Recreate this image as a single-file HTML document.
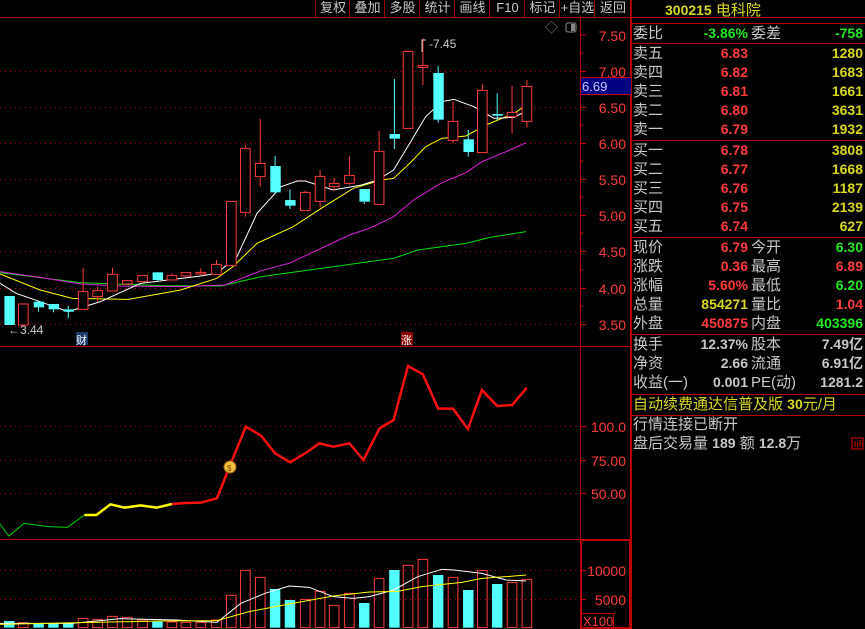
<!DOCTYPE html>
<html><head><meta charset="utf-8"><style>
*{margin:0;padding:0}
body{width:865px;height:629px;background:#000;overflow:hidden;position:relative;font-family:"Liberation Sans","Noto Sans CJK SC",sans-serif}
.t{position:absolute;white-space:nowrap;font-size:15px;line-height:17px}
.l{color:#c8c8c8}
.n{font-weight:bold;font-size:14px;text-align:right}
.r{color:#ff3b3b}.g{color:#22e822}.y{color:#d8d820}.w{color:#c8c8c8}
.tb{position:absolute;top:0;height:17px;color:#c8c8c8;font-size:13px;line-height:16px;text-align:center;border-left:1px solid #900}
</style></head><body>
<svg width="865" height="629" style="position:absolute;left:0;top:0">
<!-- frame lines -->
<line x1="0" y1="17.5" x2="865" y2="17.5" stroke="#a00" />
<line x1="580.5" y1="17" x2="580.5" y2="629" stroke="#b00"/>
<line x1="631" y1="0" x2="631" y2="629" stroke="#b00" stroke-width="2"/>
<line x1="0" y1="346.5" x2="631" y2="346.5" stroke="#b00"/>
<line x1="0" y1="539.5" x2="631" y2="539.5" stroke="#b00"/>
<rect x="581" y="540" width="49" height="88" fill="none" stroke="#b00" stroke-width="2"/>
<!-- price grid -->
<g stroke="#a00" stroke-dasharray="1 4">
<line x1="0" y1="71.5" x2="580" y2="71.5"/><line x1="0" y1="107.5" x2="580" y2="107.5"/>
<line x1="0" y1="143.5" x2="580" y2="143.5"/><line x1="0" y1="179.5" x2="580" y2="179.5"/>
<line x1="0" y1="215.5" x2="580" y2="215.5"/><line x1="0" y1="251.5" x2="580" y2="251.5"/>
<line x1="0" y1="288.5" x2="580" y2="288.5"/><line x1="0" y1="324.5" x2="580" y2="324.5"/>
<line x1="0" y1="426.5" x2="580" y2="426.5"/><line x1="0" y1="460.5" x2="580" y2="460.5"/><line x1="0" y1="493.5" x2="580" y2="493.5"/>
<line x1="0" y1="570.5" x2="580" y2="570.5"/><line x1="0" y1="599.5" x2="580" y2="599.5"/>
</g>
<g stroke="#c00">
<line x1="580" y1="35" x2="586" y2="35"/><line x1="580" y1="53" x2="583" y2="53"/><line x1="580" y1="71.5" x2="586" y2="71.5"/>
<line x1="580" y1="107.5" x2="586" y2="107.5"/><line x1="580" y1="125" x2="583" y2="125"/><line x1="580" y1="143.5" x2="586" y2="143.5"/><line x1="580" y1="161" x2="583" y2="161"/>
<line x1="580" y1="179.5" x2="586" y2="179.5"/><line x1="580" y1="197" x2="583" y2="197"/><line x1="580" y1="215.5" x2="586" y2="215.5"/><line x1="580" y1="233" x2="583" y2="233"/>
<line x1="580" y1="251.5" x2="586" y2="251.5"/><line x1="580" y1="270" x2="583" y2="270"/><line x1="580" y1="288.5" x2="586" y2="288.5"/><line x1="580" y1="306" x2="583" y2="306"/><line x1="580" y1="324.5" x2="586" y2="324.5"/>
<line x1="580" y1="426.5" x2="586" y2="426.5"/><line x1="580" y1="460.5" x2="586" y2="460.5"/><line x1="580" y1="493.5" x2="586" y2="493.5"/>
<line x1="580" y1="570.5" x2="586" y2="570.5"/><line x1="580" y1="599.5" x2="586" y2="599.5"/>
</g>
<g font-family="Liberation Sans" font-size="14" fill="#ff3b3b" text-anchor="end">
<text x="626" y="41">7.50</text><text x="626" y="77">7.00</text><text x="626" y="149">6.00</text>
<text x="626" y="185">5.50</text><text x="626" y="221">5.00</text><text x="626" y="257">4.50</text>
<text x="626" y="294">4.00</text><text x="626" y="330">3.50</text><text x="626" y="113">6.50</text>
<text x="626" y="432">100.0</text><text x="626" y="466">75.00</text><text x="626" y="499">50.00</text>
<text x="626" y="576">10000</text><text x="626" y="605">5000</text>
</g>
<rect x="581" y="78" width="50" height="16" fill="#000080"/>
<line x1="581" y1="77.5" x2="631" y2="77.5" stroke="#c00"/><line x1="581" y1="94.5" x2="631" y2="94.5" stroke="#c00"/>
<text x="582" y="91" font-family="Liberation Sans" font-size="13" fill="#c8c8ff">6.69</text>
<rect x="581.5" y="613.5" width="32" height="15" fill="none" stroke="#b00"/>
<text x="583" y="626" font-family="Liberation Sans" font-size="13" fill="#ff3b3b">X100</text>
<text x="545" y="32" font-size="13" fill="#888">◇</text>
<rect x="566" y="23" width="10" height="9" rx="2" fill="none" stroke="#888"/><rect x="571" y="24" width="4" height="7" fill="#888"/>

<!-- price panel data (zoom coords) -->
<g transform="scale(0.40161,0.33333)">
<g stroke="#54ffff" stroke-width="1" vector-effect="non-scaling-stroke">
</g>
<g fill="none" stroke-width="1">
<polyline vector-effect="non-scaling-stroke" stroke="#00e000" points="0,818 200,848 400,857 550,858 650,830 800,805 980,775 1040,750 1160,730 1220,712 1310,695"/>
<polyline vector-effect="non-scaling-stroke" stroke="#e020e0" points="0,815 100,832 200,852 300,858 450,860 560,855 650,812 720,790 800,745 870,705 920,685 980,650 1030,600 1100,548 1160,518 1200,485 1260,455 1310,428"/>
<polyline vector-effect="non-scaling-stroke" stroke="#ffff00" points="0,822 100,870 180,895 320,898 450,870 540,835 580,800 640,730 730,680 800,625 880,565 950,540 980,535 1020,490 1060,440 1100,415 1160,408 1210,375 1280,340 1310,316"/>
<polyline vector-effect="non-scaling-stroke" stroke="#ffffff" points="0,850 40,880 100,905 170,935 250,905 350,850 500,828 540,820 590,770 640,640 700,560 740,543 760,543 830,570 900,555 940,540 980,510 1020,430 1060,350 1100,305 1130,298 1180,320 1230,355 1280,352 1310,333"/>
</g>
<g stroke="#ff3b3b" vector-effect="non-scaling-stroke">
<line vector-effect="non-scaling-stroke" x1="207" y1="803" x2="207" y2="928"/><line vector-effect="non-scaling-stroke" x1="243" y1="860" x2="243" y2="905"/><line vector-effect="non-scaling-stroke" x1="280" y1="803" x2="280" y2="873"/>
<line vector-effect="non-scaling-stroke" x1="428" y1="820" x2="428" y2="840"/><line vector-effect="non-scaling-stroke" x1="500" y1="805" x2="500" y2="825"/><line vector-effect="non-scaling-stroke" x1="539" y1="780" x2="539" y2="823"/>
<line vector-effect="non-scaling-stroke" x1="611" y1="435" x2="611" y2="650"/><line vector-effect="non-scaling-stroke" x1="648" y1="357" x2="648" y2="560"/><line vector-effect="non-scaling-stroke" x1="760" y1="572" x2="760" y2="632"/>
<line vector-effect="non-scaling-stroke" x1="797" y1="510" x2="797" y2="622"/><line vector-effect="non-scaling-stroke" x1="832" y1="533" x2="832" y2="572"/><line vector-effect="non-scaling-stroke" x1="870" y1="468" x2="870" y2="555"/>
<line vector-effect="non-scaling-stroke" x1="944" y1="393" x2="944" y2="613"/><line vector-effect="non-scaling-stroke" x1="1053" y1="115" x2="1053" y2="255"/><line vector-effect="non-scaling-stroke" x1="1128" y1="305" x2="1128" y2="430"/>
<line vector-effect="non-scaling-stroke" x1="1201" y1="253" x2="1201" y2="458"/><line vector-effect="non-scaling-stroke" x1="1275" y1="258" x2="1275" y2="400"/><line vector-effect="non-scaling-stroke" x1="1312" y1="240" x2="1312" y2="383"/>
</g>
<g fill="#000" stroke="#ff3b3b">
<rect vector-effect="non-scaling-stroke" x="46" y="912" width="24" height="63"/><rect vector-effect="non-scaling-stroke" x="195" y="875" width="24" height="53"/>
<rect vector-effect="non-scaling-stroke" x="231" y="872" width="24" height="18"/><rect vector-effect="non-scaling-stroke" x="268" y="823" width="24" height="50"/>
<rect vector-effect="non-scaling-stroke" x="305" y="842" width="24" height="10"/><rect vector-effect="non-scaling-stroke" x="343" y="827" width="24" height="18"/>
<rect vector-effect="non-scaling-stroke" x="416" y="827" width="24" height="13"/><rect vector-effect="non-scaling-stroke" x="451" y="818" width="24" height="10"/>
<rect vector-effect="non-scaling-stroke" x="488" y="817" width="24" height="5"/><rect vector-effect="non-scaling-stroke" x="527" y="793" width="24" height="30"/>
<rect vector-effect="non-scaling-stroke" x="564" y="604" width="24" height="193"/><rect vector-effect="non-scaling-stroke" x="599" y="445" width="24" height="192"/>
<rect vector-effect="non-scaling-stroke" x="636" y="490" width="24" height="40"/><rect vector-effect="non-scaling-stroke" x="748" y="577" width="24" height="55"/>
<rect vector-effect="non-scaling-stroke" x="785" y="529" width="24" height="75"/><rect vector-effect="non-scaling-stroke" x="820" y="550" width="24" height="10"/>
<rect vector-effect="non-scaling-stroke" x="858" y="526" width="24" height="24"/><rect vector-effect="non-scaling-stroke" x="932" y="454" width="24" height="159"/>
<rect vector-effect="non-scaling-stroke" x="1004" y="154" width="24" height="231"/><rect vector-effect="non-scaling-stroke" x="1041" y="196" width="24" height="6"/>
<rect vector-effect="non-scaling-stroke" x="1116" y="364" width="24" height="57"/><rect vector-effect="non-scaling-stroke" x="1189" y="271" width="24" height="187"/>
<rect vector-effect="non-scaling-stroke" x="1263" y="337" width="24" height="13"/><rect vector-effect="non-scaling-stroke" x="1300" y="259" width="24" height="105"/>
</g>
<g stroke="#54ffff">
<line vector-effect="non-scaling-stroke" x1="96" y1="905" x2="96" y2="935"/><line vector-effect="non-scaling-stroke" x1="133" y1="912" x2="133" y2="937"/><line vector-effect="non-scaling-stroke" x1="170" y1="918" x2="170" y2="955"/>
<line vector-effect="non-scaling-stroke" x1="392" y1="817" x2="392" y2="845"/><line vector-effect="non-scaling-stroke" x1="685" y1="468" x2="685" y2="580"/><line vector-effect="non-scaling-stroke" x1="722" y1="568" x2="722" y2="627"/>
<line vector-effect="non-scaling-stroke" x1="907" y1="567" x2="907" y2="612"/><line vector-effect="non-scaling-stroke" x1="982" y1="237" x2="982" y2="447"/><line vector-effect="non-scaling-stroke" x1="1091" y1="198" x2="1091" y2="368"/>
<line vector-effect="non-scaling-stroke" x1="1166" y1="390" x2="1166" y2="470"/><line vector-effect="non-scaling-stroke" x1="1238" y1="280" x2="1238" y2="360"/>
</g>
<g fill="#54ffff">
<rect x="11" y="888" width="26" height="87"/><rect x="84" y="905" width="26" height="17"/><rect x="121" y="912" width="26" height="16"/>
<rect x="158" y="928" width="26" height="7"/><rect x="380" y="817" width="26" height="23"/><rect x="673" y="498" width="26" height="79"/>
<rect x="710" y="600" width="26" height="17"/><rect x="895" y="567" width="26" height="38"/><rect x="970" y="402" width="26" height="14"/>
<rect x="1079" y="219" width="26" height="140"/><rect x="1154" y="418" width="26" height="38"/><rect x="1226" y="342" width="26" height="5"/>
</g>
</g>
<text x="8" y="334" font-family="Liberation Sans" font-size="12" fill="#c8c8c8">←3.44</text>
<polyline points="422,52 422,40 426,40" fill="none" stroke="#c8c8c8"/>
<text x="429" y="48" font-family="Liberation Sans" font-size="12" fill="#c8c8c8">-7.45</text>
<rect x="76" y="332" width="12" height="13" fill="#1a3a6a"/><text x="76" y="344" font-size="11" fill="#fff" font-family="Noto Sans CJK SC">财</text>
<rect x="401" y="332" width="12" height="13" fill="#8a0000"/><text x="401" y="344" font-size="11" fill="#fff" font-family="Noto Sans CJK SC">涨</text>

<!-- indicator -->
<g transform="translate(0,330) scale(0.40161,0.33333)" fill="none">
<polyline vector-effect="non-scaling-stroke" stroke="#00d000" stroke-width="1" points="0,582 22,618 60,580 90,585 120,590 168,592 210,555"/>
<polyline vector-effect="non-scaling-stroke" stroke="#ffff00" stroke-width="2.5" points="210,555 240,555 275,523 310,533 350,526 390,533 428,522"/>
<polyline vector-effect="non-scaling-stroke" stroke="#ff1010" stroke-width="2.5" points="428,522 460,519 500,518 540,505 575,400 612,290 650,317 685,370 722,397 760,370 795,340 830,350 870,340 905,390 945,295 980,270 1016,108 1053,133 1091,236 1128,236 1165,297 1200,180 1238,228 1275,225 1312,173"/>
</g>
<circle cx="230" cy="467" r="6" fill="#f0c040" stroke="#a06010"/><text x="227" y="471" font-size="8" font-family="Liberation Sans" fill="#804000">$</text>

<!-- volume -->
<g transform="translate(0,330) scale(0.40161,0.33333)">
<g fill="#54ffff">
<rect x="10" y="873" width="26" height="20"/><rect x="83" y="880" width="26" height="13"/><rect x="120" y="880" width="26" height="13"/><rect x="157" y="880" width="26" height="13"/>
<rect x="379" y="875" width="26" height="18"/><rect x="672" y="777" width="26" height="116"/><rect x="709" y="810" width="26" height="83"/>
<rect x="894" y="819" width="26" height="74"/><rect x="969" y="720" width="26" height="173"/><rect x="1078" y="735" width="26" height="158"/>
<rect x="1153" y="780" width="26" height="113"/><rect x="1225" y="762" width="26" height="131"/>
</g>
<g fill="none" stroke="#ff3b3b">
<rect vector-effect="non-scaling-stroke" x="46" y="878" width="24" height="15"/><rect vector-effect="non-scaling-stroke" x="195" y="865" width="24" height="28"/>
<rect vector-effect="non-scaling-stroke" x="231" y="868" width="24" height="25"/><rect vector-effect="non-scaling-stroke" x="268" y="859" width="24" height="34"/>
<rect vector-effect="non-scaling-stroke" x="305" y="862" width="24" height="31"/><rect vector-effect="non-scaling-stroke" x="343" y="870" width="24" height="23"/>
<rect vector-effect="non-scaling-stroke" x="416" y="876" width="24" height="17"/><rect vector-effect="non-scaling-stroke" x="451" y="877" width="24" height="16"/>
<rect vector-effect="non-scaling-stroke" x="488" y="877" width="24" height="16"/><rect vector-effect="non-scaling-stroke" x="527" y="870" width="24" height="23"/>
<rect vector-effect="non-scaling-stroke" x="564" y="796" width="24" height="97"/><rect vector-effect="non-scaling-stroke" x="599" y="721" width="24" height="172"/>
<rect vector-effect="non-scaling-stroke" x="636" y="742" width="24" height="151"/><rect vector-effect="non-scaling-stroke" x="748" y="808" width="24" height="85"/>
<rect vector-effect="non-scaling-stroke" x="785" y="784" width="24" height="109"/><rect vector-effect="non-scaling-stroke" x="820" y="826" width="24" height="67"/>
<rect vector-effect="non-scaling-stroke" x="858" y="790" width="24" height="103"/><rect vector-effect="non-scaling-stroke" x="932" y="745" width="24" height="148"/>
<rect vector-effect="non-scaling-stroke" x="1004" y="706" width="24" height="187"/><rect vector-effect="non-scaling-stroke" x="1041" y="688" width="24" height="205"/>
<rect vector-effect="non-scaling-stroke" x="1116" y="742" width="24" height="151"/><rect vector-effect="non-scaling-stroke" x="1189" y="721" width="24" height="172"/>
<rect vector-effect="non-scaling-stroke" x="1263" y="757" width="24" height="136"/><rect vector-effect="non-scaling-stroke" x="1300" y="748" width="24" height="145"/>
<polyline vector-effect="non-scaling-stroke" stroke="#ffffff" points="0,880 180,880 300,866 440,870 540,877 600,820 660,790 720,768 770,772 830,800 880,805 920,800 980,780 1040,740 1100,718 1130,720 1200,730 1260,750 1310,753"/>
<polyline vector-effect="non-scaling-stroke" stroke="#ffff00" points="0,883 200,878 400,873 540,872 620,845 720,822 830,798 920,786 990,784 1050,770 1150,757 1200,745 1260,740 1310,735"/>
</g>
</g>
<!-- right panel lines -->
<g stroke="#b00">
<line x1="631" y1="23.5" x2="865" y2="23.5"/><line x1="631" y1="43.5" x2="865" y2="43.5"/>
<line x1="631" y1="140.5" x2="865" y2="140.5"/><line x1="631" y1="237.5" x2="865" y2="237.5"/>
<line x1="631" y1="334.5" x2="865" y2="334.5"/><line x1="631" y1="394.5" x2="865" y2="394.5"/><line x1="631" y1="415.5" x2="865" y2="415.5"/>
</g>
<rect x="852" y="438" width="11" height="11" fill="none" stroke="#d00"/>
<g stroke="#d00"><line x1="855" y1="441" x2="855" y2="447"/><line x1="857.5" y1="443" x2="857.5" y2="447"/><line x1="860" y1="440" x2="860" y2="447"/></g>
</svg>

<div class="tb" style="left:315px;width:34px">复权</div><div class="tb" style="left:349px;width:35px">叠加</div>
<div class="tb" style="left:384px;width:35px">多股</div><div class="tb" style="left:419px;width:35px">统计</div>
<div class="tb" style="left:454px;width:35px">画线</div><div class="tb" style="left:489px;width:35px">F10</div>
<div class="tb" style="left:524px;width:35px">标记</div><div class="tb" style="left:559px;width:35px">+自选</div>
<div class="tb" style="left:594px;width:36px;border-right:1px solid #900">返回</div>

<div class="t y" style="left:665px;top:2px;font-size:15px"><b style="font-size:14px">300215</b> 电科院</div>
<div class="t l" style="left:633px;top:25px">委比</div><div class="t n g" style="right:117px;top:25px">-3.86%</div>
<div class="t l" style="left:751px;top:25px">委差</div><div class="t n g" style="right:2px;top:25px">-758</div>

<div class="t l" style="left:633px;top:45px">卖五</div><div class="t n r" style="right:117px;top:45px">6.83</div><div class="t n y" style="right:2px;top:45px">1280</div>
<div class="t l" style="left:633px;top:64px">卖四</div><div class="t n r" style="right:117px;top:64px">6.82</div><div class="t n y" style="right:2px;top:64px">1683</div>
<div class="t l" style="left:633px;top:83px">卖三</div><div class="t n r" style="right:117px;top:83px">6.81</div><div class="t n y" style="right:2px;top:83px">1661</div>
<div class="t l" style="left:633px;top:102px">卖二</div><div class="t n r" style="right:117px;top:102px">6.80</div><div class="t n y" style="right:2px;top:102px">3631</div>
<div class="t l" style="left:633px;top:121px">卖一</div><div class="t n r" style="right:117px;top:121px">6.79</div><div class="t n y" style="right:2px;top:121px">1932</div>
<div class="t l" style="left:633px;top:142px">买一</div><div class="t n r" style="right:117px;top:142px">6.78</div><div class="t n y" style="right:2px;top:142px">3808</div>
<div class="t l" style="left:633px;top:161px">买二</div><div class="t n r" style="right:117px;top:161px">6.77</div><div class="t n y" style="right:2px;top:161px">1668</div>
<div class="t l" style="left:633px;top:180px">买三</div><div class="t n r" style="right:117px;top:180px">6.76</div><div class="t n y" style="right:2px;top:180px">1187</div>
<div class="t l" style="left:633px;top:199px">买四</div><div class="t n r" style="right:117px;top:199px">6.75</div><div class="t n y" style="right:2px;top:199px">2139</div>
<div class="t l" style="left:633px;top:218px">买五</div><div class="t n r" style="right:117px;top:218px">6.74</div><div class="t n y" style="right:2px;top:218px">627</div>

<div class="t l" style="left:633px;top:239px">现价</div><div class="t n r" style="right:117px;top:239px">6.79</div><div class="t l" style="left:751px;top:239px">今开</div><div class="t n g" style="right:2px;top:239px">6.30</div>
<div class="t l" style="left:633px;top:258px">涨跌</div><div class="t n r" style="right:117px;top:258px">0.36</div><div class="t l" style="left:751px;top:258px">最高</div><div class="t n r" style="right:2px;top:258px">6.89</div>
<div class="t l" style="left:633px;top:277px">涨幅</div><div class="t n r" style="right:117px;top:277px">5.60%</div><div class="t l" style="left:751px;top:277px">最低</div><div class="t n g" style="right:2px;top:277px">6.20</div>
<div class="t l" style="left:633px;top:296px">总量</div><div class="t n y" style="right:117px;top:296px">854271</div><div class="t l" style="left:751px;top:296px">量比</div><div class="t n r" style="right:2px;top:296px">1.04</div>
<div class="t l" style="left:633px;top:315px">外盘</div><div class="t n r" style="right:117px;top:315px">450875</div><div class="t l" style="left:751px;top:315px">内盘</div><div class="t n g" style="right:2px;top:315px">403396</div>

<div class="t l" style="left:633px;top:336px">换手</div><div class="t n w" style="right:117px;top:336px">12.37%</div><div class="t l" style="left:751px;top:336px">股本</div><div class="t n w" style="right:2px;top:336px">7.49亿</div>
<div class="t l" style="left:633px;top:355px">净资</div><div class="t n w" style="right:117px;top:355px">2.66</div><div class="t l" style="left:751px;top:355px">流通</div><div class="t n w" style="right:2px;top:355px">6.91亿</div>
<div class="t l" style="left:633px;top:374px">收益(一)</div><div class="t n w" style="right:117px;top:374px">0.001</div><div class="t l" style="left:751px;top:374px">PE(动)</div><div class="t n w" style="right:2px;top:374px">1281.2</div>

<div class="t y" style="left:633px;top:396px">自动续费通达信普及版 <b style="font-size:14px">30</b>元/月</div>
<div class="t l" style="left:633px;top:416px">行情连接已断开</div>
<div class="t l" style="left:633px;top:435px">盘后交易量 <b style="font-size:14px">189</b> 额 <b style="font-size:14px">12.8</b>万</div>
</body></html>
